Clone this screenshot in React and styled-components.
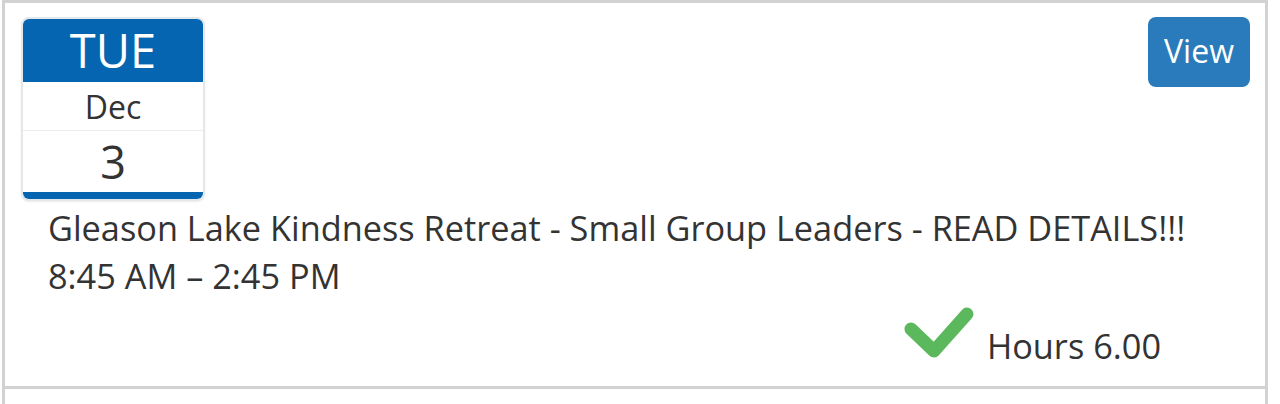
import React from "react";
import styled, { createGlobalStyle } from "styled-components";

const Global = createGlobalStyle`
  html, body { margin: 0; padding: 0; background: #fff; }
  body { font-family: "Open Sans", "Liberation Sans", sans-serif; color: #333; }
`;

const Page = styled.div`
  padding: 0 12px 0 2px;
`;

const List = styled.div`
  border: 3px solid #d2d2d2;
  border-bottom: none;
`;

const Item = styled.div`
  border-bottom: 3px solid #d2d2d2;
  padding: 14px 15px 16px 16px;
  min-height: ${(p) => (p.$empty ? "200px" : "auto")};
`;

const TopRow = styled.div`
  display: flex;
  justify-content: space-between;
  align-items: flex-start;
`;

const Cal = styled.div`
  width: 184px;
  box-sizing: border-box;
  border: 2px solid #e4e8ea;
  border-radius: 8px;
  overflow: hidden;
  box-shadow: 0 1px 2px rgba(0, 0, 0, 0.08);
  background: #fff;
  display: flex;
  flex-direction: column;
`;

const CalHead = styled.div`
  background: #0565b0;
  color: #fff;
  height: 63px;
  display: flex;
  align-items: center;
  justify-content: center;
  font-size: 47px;
  line-height: 1;
`;

const CalMonth = styled.div`
  height: 48px;
  display: flex;
  align-items: center;
  justify-content: center;
  font-size: 32px;
  border-bottom: 1px solid #ececec;
`;

const CalDay = styled.div`
  height: 61px;
  display: flex;
  align-items: center;
  justify-content: center;
  font-size: 45px;
  border-bottom: 7px solid #0565b0;
`;

const ViewButton = styled.button`
  background: #2a7bbb;
  color: #fff;
  border: none;
  border-radius: 8px;
  width: 102px;
  height: 70px;
  margin-top: 0;
  font-family: inherit;
  font-size: 32px;
  padding: 0 0 4px;
  cursor: pointer;
`;

const Info = styled.div`
  padding: 3px 0 0 27px;
  font-size: 34.3px;
  line-height: 48px;
`;

const Line = styled.div`
  white-space: nowrap;
`;

const HoursRow = styled.div`
  display: flex;
  justify-content: flex-end;
  align-items: center;
  gap: 12px;
  margin-top: 22px;
  padding-right: 89px;
  font-size: 34.3px;
  line-height: 48px;
`;

const Check = styled.svg`
  width: 72px;
  height: 56px;
  margin-top: -26px;
  display: block;
`;

export default function App() {
  return (
    <>
      <Global />
      <Page>
        <List>
          <Item>
            <TopRow>
              <Cal>
                <CalHead>TUE</CalHead>
                <CalMonth>Dec</CalMonth>
                <CalDay>3</CalDay>
              </Cal>
              <ViewButton>View</ViewButton>
            </TopRow>
            <Info>
              <Line>Gleason Lake Kindness Retreat - Small Group Leaders - READ DETAILS!!!</Line>
              <Line>8:45 AM – 2:45 PM</Line>
            </Info>
            <HoursRow>
              <Check viewBox="0 0 72 56">
                <polyline
                  points="8,24 31,46 64,9"
                  fill="none"
                  stroke="#5cb85c"
                  strokeWidth="13"
                  strokeLinecap="round"
                  strokeLinejoin="round"
                />
              </Check>
              <span>Hours 6.00</span>
            </HoursRow>
          </Item>
          <Item $empty />
        </List>
      </Page>
    </>
  );
}
